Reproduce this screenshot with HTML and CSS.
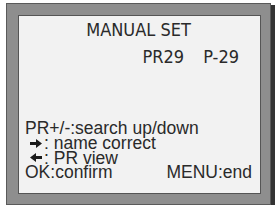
FILE: index.html
```html
<!DOCTYPE html>
<html>
<head>
<meta charset="utf-8">
<link rel="stylesheet" href="styles.css">
</head>
<body>
<div class="frame">
  <div class="screen">
    <div class="title">MANUAL SET</div>
    <div class="prog"><span>PR29</span><span>P-29</span></div>
    <div class="help">
      <div class="line">PR+/-:search up/down</div>
      <div class="line ind"><svg class="arrow" viewBox="0 0 12 9"><polygon points="0,3 6,3 6,0 12,4.5 6,9 6,6 0,6" /></svg>: name correct</div>
      <div class="line ind"><svg class="arrow" viewBox="0 0 12 9"><polygon points="12,3 6,3 6,0 0,4.5 6,9 6,6 12,6" /></svg>: PR view</div>
      <div class="line split"><span>OK:confirm</span><span>MENU:end</span></div>
    </div>
  </div>
</div>
</body>
</html>
```
FILE: styles.css
```css
html, body {
  margin: 0;
  padding: 0;
  background: #ffffff;
}
.frame {
  margin: 3px 0 0 6px;
  width: 265px;
  height: 202px;
  box-sizing: border-box;
  background: #8e8e8e;
  border: 1px solid #5a5a5a;
  box-shadow: 4px 2px 0 #333333;
  padding: 11px 9px 10px 11px;
}
.screen {
  box-sizing: border-box;
  height: 100%;
  background: #f2f2f2;
  border: 1px solid #555555;
  display: flex;
  flex-direction: column;
  color: #2a2a2a;
  padding: 4px 8px 13px 6px;
}
.title {
  font-family: "Liberation Sans Narrow", "DejaVu Sans Condensed", sans-serif;
  font-size: 18px;
  line-height: 20px;
  text-align: center;
}
.prog {
  font-family: "Liberation Sans Narrow", "DejaVu Sans Condensed", sans-serif;
  font-size: 18px;
  line-height: 20px;
  margin-top: 7px;
  display: flex;
  justify-content: flex-end;
  gap: 19px;
  padding-right: 13px;
}
.help {
  margin-top: auto;
  font-family: "Liberation Sans", sans-serif;
  font-size: 17.5px;
  line-height: 14.7px;
}
.line {
  white-space: nowrap;
}
.ind {
  padding-left: 5px;
  display: flex;
  align-items: center;
}
.arrow {
  width: 12px;
  height: 9px;
  fill: #1a1a1a;
  margin-right: 2px;
}
.split {
  display: flex;
  justify-content: space-between;
}
```
